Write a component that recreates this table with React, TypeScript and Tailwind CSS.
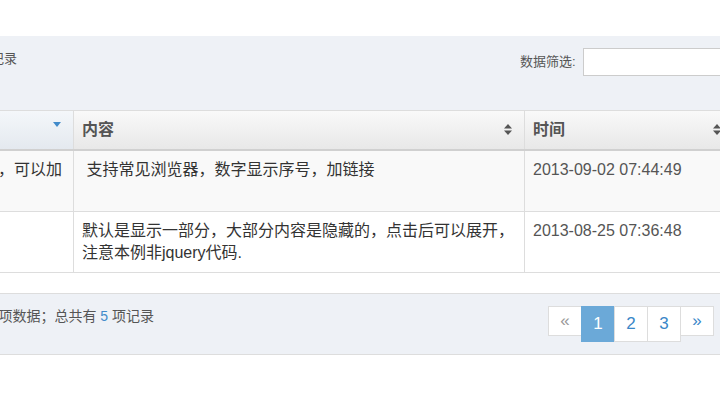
import React from 'react';

const SortBoth = () => (
  <svg width="8" height="11" viewBox="0 0 8 11" className="text-[#555]">
    <path d="M4 0 L8 4.5 H0 Z" fill="currentColor" />
    <path d="M0 6.5 H8 L4 11 Z" fill="currentColor" />
  </svg>
);

const SortDesc = () => (
  <svg width="8" height="5" viewBox="0 0 8 5" className="text-[#428bca]">
    <path d="M0 0 H8 L4 5 Z" fill="currentColor" />
  </svg>
);

const rows = [
  {
    title: '简单的纯JS表格分页排序，可以加',
    content: '\u00a0支持常见浏览器，数字显示序号，加链接',
    time: '2013-09-02 07:44:49',
    bg: 'bg-[#f9f9f9]',
  },
  {
    title: '',
    content: '默认是显示一部分，大部分内容是隐藏的，点击后可以展开，注意本例非jquery代码.',
    time: '2013-08-25 07:36:48',
    bg: 'bg-white',
  },
];

export default function App() {
  return (
    <div
      className="w-[720px] h-[400px] bg-white overflow-hidden text-[#333]"
      style={{ fontFamily: '"Liberation Sans", "Noto Sans CJK SC", sans-serif' }}
    >
      <div className="h-[36px]" />

      {/* filter bar */}
      <div className="h-[74px] bg-[#eef1f6] flex items-start pt-[12px] w-[900px]">
        <div className="w-[17px] shrink-0 flex justify-end overflow-hidden whitespace-nowrap text-[13px] leading-[20px] text-[#555] mt-[1px]">
          每页显示 10 条记录
        </div>
        <div className="ml-[503px] flex items-center shrink-0">
          <span className="w-[63px] text-[13px] text-[#555] whitespace-nowrap">数据筛选:</span>
          <input className="w-[200px] h-[28px] bg-white border border-[#ccc] outline-none" />
        </div>
      </div>

      {/* table */}
      <div className="w-[900px]">
        <div className="grid grid-cols-[74px_451px_300px] h-[41px] border-t border-[#ddd] border-b-2 border-b-[#d0d0d0]">
          <div className="relative border-r border-[#ddd] bg-linear-to-b from-[#f4f7fa] to-[#e4e9ef]">
            <span className="absolute right-[12px] top-[11px]">
              <SortDesc />
            </span>
          </div>
          <div className="relative border-r border-[#ddd] bg-linear-to-b from-[#f9f9f9] to-[#e8e8e8] pl-2 flex items-center">
            <span className="text-[16px] font-bold text-[#555]">内容</span>
            <span className="absolute right-[12px] top-[13px]">
              <SortBoth />
            </span>
          </div>
          <div className="relative bg-linear-to-b from-[#f9f9f9] to-[#e8e8e8] pl-2 flex items-center">
            <span className="text-[16px] font-bold text-[#555]">时间</span>
            <span className="absolute left-[188px] top-[13px]">
              <SortBoth />
            </span>
          </div>
        </div>

        {rows.map((r, i) => (
          <div
            key={i}
            className={`grid grid-cols-[74px_451px_300px] h-[61px] border-b border-[#ddd] ${r.bg}`}
          >
            <div className="border-r border-[#ddd] pt-2 pr-[11px] flex justify-end overflow-hidden whitespace-nowrap text-[16px] leading-[22px] items-start">
              {r.title}
            </div>
            <div className="border-r border-[#ddd] pt-2 px-2 text-[16px] leading-[22px]">
              {r.content}
            </div>
            <div className="pt-2 px-2 text-[16px] leading-[22px] text-[#555]">{r.time}</div>
          </div>
        ))}
      </div>

      {/* footer */}
      <div className="mt-[20px] h-[62px] bg-[#eef1f6] border-y border-[#ddd] flex items-start pt-[12px] pr-[6px]">
        <div className="w-[154px] shrink-0 flex justify-end overflow-hidden whitespace-nowrap text-[14px] leading-[20px] text-[#555]">
          显示第 1 至 2 项数据；总共有&nbsp;<span className="text-[#428bca]">5</span>&nbsp;项记录
        </div>
        <div className="ml-auto flex items-start">
          <span className="w-[34px] h-[30px] border border-[#ddd] bg-white flex items-center justify-center text-[#999] text-[17px]">
            «
          </span>
          <span className="-ml-px w-[34px] h-[36px] border border-[#6ba9d8] bg-[#6ba9d8] text-white flex items-center justify-center text-[17px]">
            1
          </span>
          <span className="-ml-px w-[34px] h-[36px] border border-[#ddd] bg-white text-[#3a87c8] flex items-center justify-center text-[17px]">
            2
          </span>
          <span className="-ml-px w-[34px] h-[36px] border border-[#ddd] bg-white text-[#3a87c8] flex items-center justify-center text-[17px]">
            3
          </span>
          <span className="-ml-px w-[34px] h-[30px] border border-[#ddd] bg-white text-[#3a87c8] flex items-center justify-center text-[17px]">
            »
          </span>
        </div>
      </div>
    </div>
  );
}
